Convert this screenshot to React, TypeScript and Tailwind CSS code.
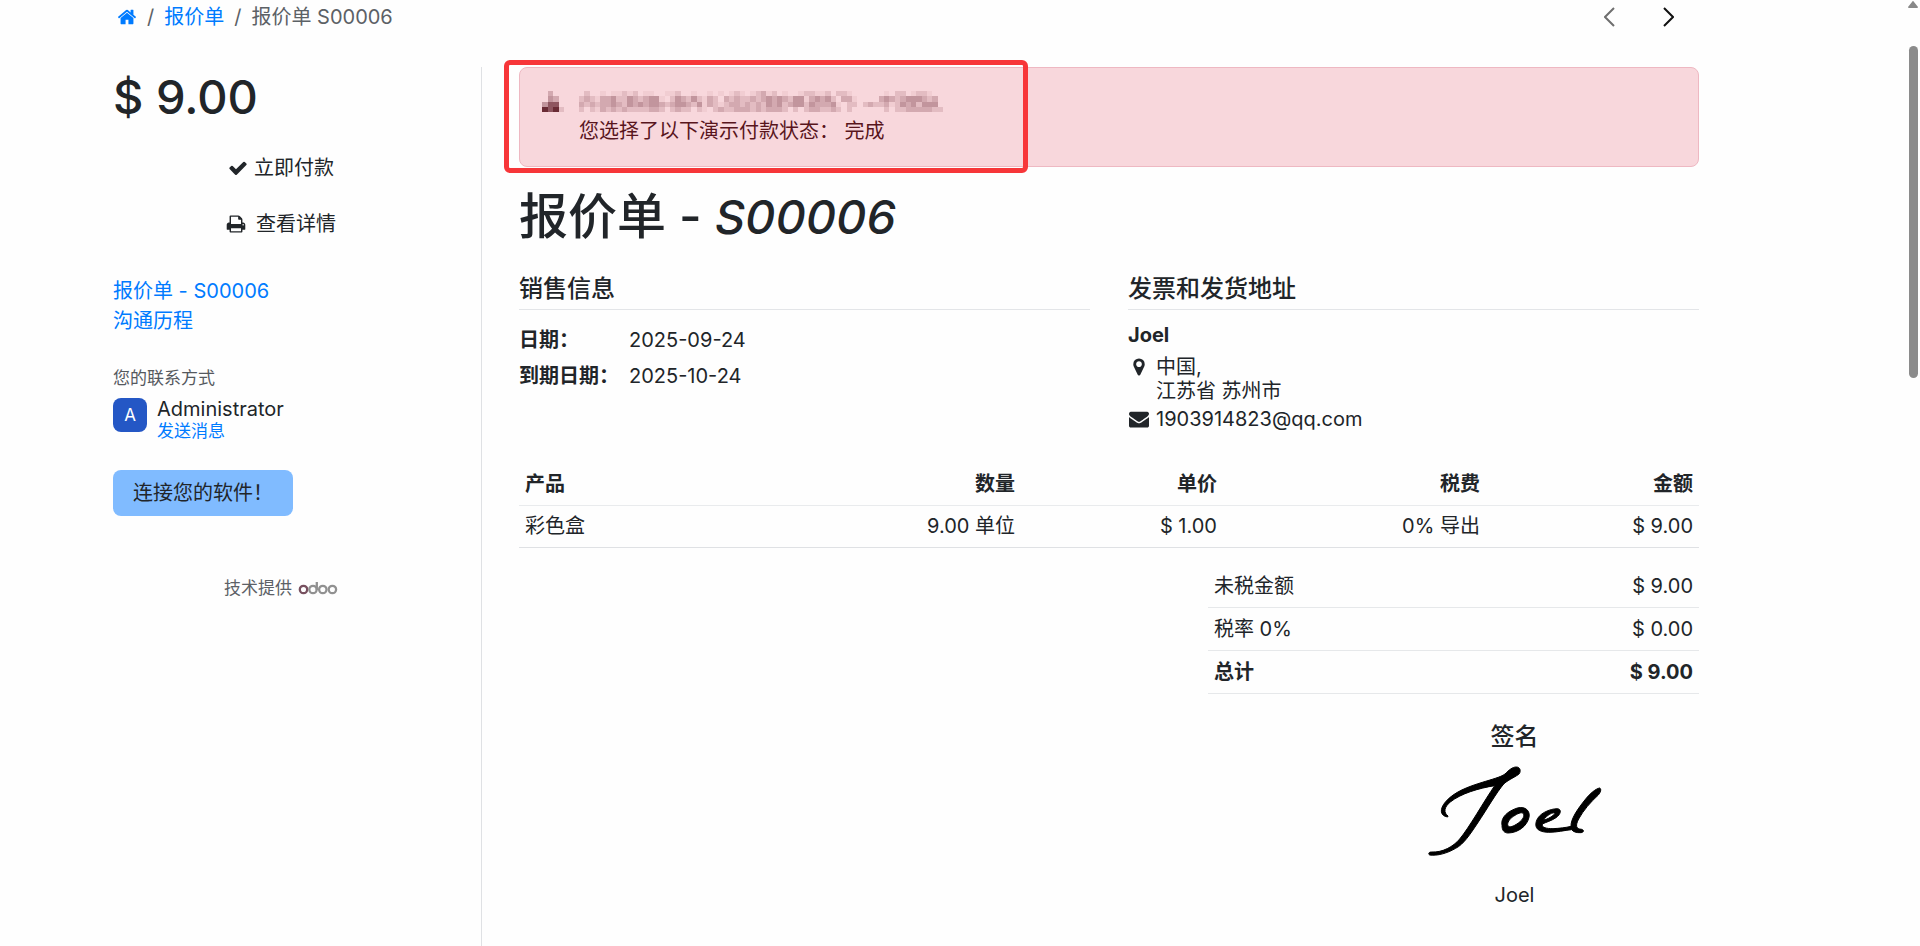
import React from 'react';

const ICONS = {
  home: 'M1472 992v480q0 26-19 45t-45 19h-384v-384h-256v384h-384q-26 0-45-19t-19-45v-480q0-1 .5-3t.5-3l575-474 575 474q1 2 1 6zm223-69l-62 74q-8 9-21 11h-3q-13 0-21-7l-692-577-692 577q-12 8-24 7-13-2-21-11l-62-74q-8-10-7-23.5t11-21.5l719-599q32-26 76-26t76 26l244 204v-195q0-14 9-23t23-9h192q14 0 23 9t9 23v408l219 182q10 8 11 21.5t-7 23.5z',
  check: 'M1671 566q0 40-28 68l-724 724-136 136q-28 28-68 28t-68-28l-136-136-362-362q-28-28-28-68t28-68l136-136q28-28 68-28t68 28l294 295 656-657q28-28 68-28t68 28l136 136q28 28 28 68z',
  print: 'M448 1536h896v-256h-896v256zm0-640h896v-384h-160q-40 0-68-28t-28-68v-160h-640v640zm1152 64q0-26-19-45t-45-19-45 19-19 45 19 45 45 19 45-19 19-45zm128 0v416q0 13-9.5 22.5t-22.5 9.5h-224v160q0 40-28 68t-68 28h-960q-40 0-68-28t-28-68v-160h-224q-13 0-22.5-9.5t-9.5-22.5v-416q0-79 56.5-135.5t135.5-56.5h64v-544q0-40 28-68t68-28h672q40 0 88 20t76 48l152 152q28 28 48 76t20 88v256h64q79 0 135.5 56.5t56.5 135.5z',
  marker: 'M1152 640q0-106-75-181t-181-75-181 75-75 181 75 181 181 75 181-75 75-181zm256 0q0 109-33 179l-364 774q-16 33-47.5 52t-67.5 19-67.5-19-46.5-52l-365-774q-33-70-33-179 0-212 150-362t362-150 362 150 150 362z',
  envelope: 'M1792 710v794q0 66-47 113t-113 47h-1472q-66 0-113-47t-47-113v-794q44 49 101 87 362 246 497 345 57 42 92.5 65.5t94.5 48 110 24.5h2q51 0 110-24.5t94.5-48 92.5-65.5q170-123 498-345 57-39 100-87zm0-294q0 79-49 151t-122 123q-376 261-468 325-10 7-42.5 31t-54 38.5-52 32.5-57.5 27-50 9h-2q-23 0-50-9t-57.5-27-52-32.5-54-38.5-42.5-31q-91-64-262-182.5t-205-142.5q-62-42-117-115.5t-55-136.5q0-78 41.5-130t118.5-52h1472q65 0 112.5 47t47.5 113z',
};

const Icon: React.FC<{ name: keyof typeof ICONS; className?: string }> = ({ name, className = 'size-5' }) => (
  <svg viewBox="0 0 1792 1792" fill="currentColor" aria-hidden="true" className={`shrink-0 ${className}`}>
    <path d={ICONS[name]} />
  </svg>
);

// Pixelated strips, one character per cell, darker towards "f"
const SHADES: Record<string, string> = {
  a: '#f1cdd2',
  b: '#e3bcc2',
  c: '#d3a9b0',
  d: '#c2959d',
  e: '#8f5660',
  f: '#6a2b35',
};

const MESSAGE_CELLS = [
  '.b..a.aabab.aa..aab..a..a.a.aba.abcab.a..abbaab.bba......a.bb.abba..',
  'bcbaccdbbdcbcdda.bdcbdbacb.cbcbbcbcdcdcbddacdcdb.cca....cdcbcdddcbc.',
  'cbcbccdcbdcdcddcbcddcbdacbabccbcbcbdcdbcddbdcccda.bb.bcbbcabdcdbddd.',
  'b.bacbcbcbbbbccb.bcbb.ba.bcbbcccbcbcccb.b.bccbbcb.b......b.bbcccccbb',
];

const ICON_CELLS = ['.c..', '.dc.', 'dee.', 'fefb'];

const Mosaic: React.FC<{ cells: string[]; className: string }> = ({ cells, className }) => (
  <svg
    viewBox={`0 0 ${cells[0].length} ${cells.length}`}
    preserveAspectRatio="none"
    shapeRendering="crispEdges"
    aria-hidden="true"
    className={className}
  >
    {cells.map((row, y) =>
      row.split('').map((c, x) => (SHADES[c] ? <rect key={`${x}-${y}`} x={x} y={y} width="1" height="1" fill={SHADES[c]} /> : null))
    )}
  </svg>
);

const OdooLogo = () => (
  <svg viewBox="0 0 40 14" fill="none" strokeWidth="2.3" role="img" aria-label="odoo" className="h-[14px] w-10">
    <circle cx="5.5" cy="8.5" r="3.7" stroke="#77505f" />
    <g stroke="#919191">
      <circle cx="15" cy="8.5" r="3.7" />
      <path d="M18.8 1v8" />
      <circle cx="24.8" cy="8.5" r="3.7" />
      <circle cx="34.4" cy="8.5" r="3.7" />
    </g>
  </svg>
);

const Signature = () => (
  <svg viewBox="0 0 540 300" stroke="#000" strokeWidth="3" role="img" aria-label="签名" className="h-[100px] w-[180px]">
    <path d="M68 171C46 168 42 148 62 125C88 95 130 80 172 67C200 58 226 52 240 42C252 30 262 21 274 21C286 21 288 33 283 41C275 49 252 58 237 71C214 98 188 144 158 189C136 222 116 253 92 265C66 280 38 288 14 285C9 282 11 276 19 276C52 278 85 260 104 237C132 204 178 122 209 77C160 85 107 101 76 126C57 141 55 158 69 168Z" />
    <path
      fillRule="evenodd"
      d="M231 196C226 171 250 153 277 144C302 138 316 153 312 172C306 199 279 218 250 219C237 219 231 211 231 196ZM248 194C250 204 261 201 274 193C291 183 299 170 296 162C292 155 281 159 270 166C256 174 248 184 248 194Z"
    />
    <path
      fillRule="evenodd"
      d="M334 184C340 161 374 146 398 146C411 149 407 163 393 173C380 182 362 187 352 192C349 203 365 206 384 206C404 205 422 203 438 199C437 178 456 149 482 117C495 101 512 86 524 84C530 87 527 97 519 106C497 126 475 151 461 177C451 196 452 207 470 208C479 211 476 217 468 218C454 219 444 215 440 209C417 211 398 217 370 217C339 216 328 204 334 184ZM356 180C368 178 386 167 390 160C386 154 364 166 356 180Z"
    />
  </svg>
);

const orderLines = [{ product: '彩色盒', quantity: '9.00 单位', price: '$ 1.00', tax: '0% 导出', amount: '$ 9.00' }];

const totals = [
  { label: '未税金额', value: '$ 9.00', strong: false },
  { label: '税率 0%', value: '$ 0.00', strong: false },
  { label: '总计', value: '$ 9.00', strong: true },
];

const Header = () => (
  <header className="flex h-[34px] items-center justify-between pl-1 pr-[25px]">
    <nav aria-label="breadcrumb">
      <ol className="flex items-center gap-[10px] text-[#5c6166]">
        <li>
          <a href="#home" aria-label="主页" className="block text-[#007bff]"><Icon name="home" /></a>
        </li>
        <li>/</li>
        <li><a href="#quotes" className="text-[#007bff]">报价单</a></li>
        <li>/</li>
        <li>报价单 S00006</li>
      </ol>
    </nav>
    <div className="flex gap-12">
      <button type="button" aria-label="上一个" className="text-[#6f6f6f]">
        <svg viewBox="0 0 11 20" fill="none" stroke="currentColor" strokeWidth="2" className="h-5 w-[11px]"><path d="M10 1L1 10l9 9" /></svg>
      </button>
      <button type="button" aria-label="下一个" className="text-[#111111]">
        <svg viewBox="0 0 11 20" fill="none" stroke="currentColor" strokeWidth="2" className="h-5 w-[11px]"><path d="M1 1l9 9-9 9" /></svg>
      </button>
    </div>
  </header>
);

const Sidebar = () => (
  <aside className="w-[369px] shrink-0 border-r border-[#dfe1e4] pr-8">
    <h2 className="text-[47px] leading-[60px] font-medium">$ 9.00</h2>
    <div className="mt-[18px] flex flex-col gap-[10px]">
      <button type="button" className="flex h-[46px] items-center justify-center gap-[6px]"><Icon name="check" />立即付款</button>
      <button type="button" className="flex h-[46px] items-center justify-center gap-[10px]"><Icon name="print" />查看详情</button>
    </div>
    <nav className="mt-[29px] flex flex-col items-start text-[#007bff]">
      <a href="#quote">报价单 - S00006</a>
      <a href="#history">沟通历程</a>
    </nav>
    <div className="mt-[30px]">
      <p className="text-[17px] leading-6 text-[#55595e]">您的联系方式</p>
      <div className="mt-2 flex gap-[10px]">
        <div className="flex size-[34px] items-center justify-center rounded-lg bg-[#2457c5] text-[17px] text-white">A</div>
        <div>
          <p className="leading-[22px]">Administrator</p>
          <a href="#message" className="block text-[17px] leading-[22px] text-[#007bff]">发送消息</a>
        </div>
      </div>
    </div>
    <button type="button" className="mt-7 h-[46px] rounded-lg bg-[#80bbff] px-5">连接您的软件！</button>
    <div className="mt-[60px] flex items-center justify-center gap-[6px] text-[17px] leading-6 text-[#5c6166]">
      技术提供
      <OdooLogo />
    </div>
  </aside>
);

const Alert = () => (
  <div role="alert" className="relative flex gap-[15px] rounded-lg border border-[#eeb8c2] bg-[#f8d7dc] p-5 text-[#58151c]">
    <Mosaic cells={ICON_CELLS} className="mt-[3px] ml-[2px] h-[21px] w-[22px] shrink-0" />
    <div className="leading-[29px]">
      <div className="flex h-[29px] items-start pt-[3px]">
        <Mosaic cells={MESSAGE_CELLS} className="h-[21px] w-[364px]" />
      </div>
      <p>您选择了以下演示付款状态： 完成</p>
    </div>
    {/* highlight frame over the message */}
    <div className="absolute -top-2 -left-4 h-[113px] w-[524px] rounded-md border-5 border-[#f73639]" />
  </div>
);

const App: React.FC = () => {
  return (
    <div className="flex min-h-screen bg-[#fefefe] font-['Inter','Noto_Sans_CJK_SC',sans-serif] text-[20px] leading-[30px] text-[#212529]">
      <div className="flex flex-1 flex-col pl-[113px] pr-[207px]">
        <Header />
        <div className="mt-[33px] flex flex-1">
          <Sidebar />
          <main className="min-w-0 flex-1 pl-[37px]">
            <Alert />
            <h1 className="mt-[21px] text-[49px] leading-[58px] font-medium">
              报价单 - <em className="text-[47px]">S00006</em>
            </h1>

            <div className="mt-7 grid grid-cols-2 gap-[38px]">
              <section>
                <h2 className="border-b border-[#e3e5e8] pb-[5px] text-[24px] leading-[30px] font-medium">销售信息</h2>
                <table className="mt-3">
                  <tbody>
                    <tr className="h-9">
                      <th className="w-[110px] text-left font-bold">日期：</th>
                      <td>2025-09-24</td>
                    </tr>
                    <tr className="h-9">
                      <th className="text-left font-bold">到期日期：</th>
                      <td>2025-10-24</td>
                    </tr>
                  </tbody>
                </table>
              </section>
              <section>
                <h2 className="border-b border-[#e3e5e8] pb-[5px] text-[24px] leading-[30px] font-medium">发票和发货地址</h2>
                <address className="mt-[10px] not-italic">
                  <p className="font-bold">Joel</p>
                  <div className="mt-[5px] flex gap-[7px] leading-6">
                    <Icon name="marker" className="mt-[2px] ml-px size-5" />
                    <p>中国,<br />江苏省 苏州市</p>
                  </div>
                  <div className="mt-px flex items-center gap-[7px]">
                    <Icon name="envelope" className="ml-px size-5" />
                    <span>1903914823@qq.com</span>
                  </div>
                </address>
              </section>
            </div>

            <table className="mt-[29px] w-full table-fixed">
              <thead>
                <tr className="h-[42px] border-b border-[#e9ebed]">
                  <th className="w-[25%] px-[6px] text-left font-bold">产品</th>
                  <th className="px-[6px] text-right font-bold">数量</th>
                  <th className="w-[202px] px-[6px] text-right font-bold">单价</th>
                  <th className="w-[263px] px-[6px] text-right font-bold">税费</th>
                  <th className="w-[213px] px-[6px] text-right font-bold">金额</th>
                </tr>
              </thead>
              <tbody>
                {orderLines.map(line => (
                  <tr key={line.product} className="h-[42px] border-b border-[#dfe1e4]">
                    <td className="px-[6px]">{line.product}</td>
                    <td className="px-[6px] text-right">{line.quantity}</td>
                    <td className="px-[6px] text-right">{line.price}</td>
                    <td className="px-[6px] text-right">{line.tax}</td>
                    <td className="px-[6px] text-right">{line.amount}</td>
                  </tr>
                ))}
              </tbody>
            </table>

            <table className="mt-[17px] ml-auto w-[491px]">
              <tbody>
                {totals.map(t => (
                  <tr key={t.label} className={`h-[43px] border-b border-[#e6e8ea] ${t.strong ? 'font-bold' : ''}`}>
                    <td className="px-[6px]">{t.label}</td>
                    <td className="px-[6px] text-right">{t.value}</td>
                  </tr>
                ))}
              </tbody>
            </table>

            <section className="mt-7 ml-auto flex w-[369px] flex-col items-center">
              <h2 className="text-[24px] leading-[30px] font-medium">签名</h2>
              <div className="mt-2"><Signature /></div>
              <p className="mt-5">Joel</p>
            </section>
          </main>
        </div>
      </div>

      {/* scrollbar */}
      <div className="flex w-[14px] flex-col items-center pt-px">
        <svg viewBox="0 0 10 8" fill="#888888" aria-hidden="true" className="h-2 w-[10px]"><path d="M4 1Q5-1 6 1L10 6Q10 7 9 7H1Q0 7 0 6Z" /></svg>
        <div className="mt-[37px] h-[332px] w-[9px] rounded-full bg-[#8b8b8b]" />
      </div>
    </div>
  );
};

export default App;
